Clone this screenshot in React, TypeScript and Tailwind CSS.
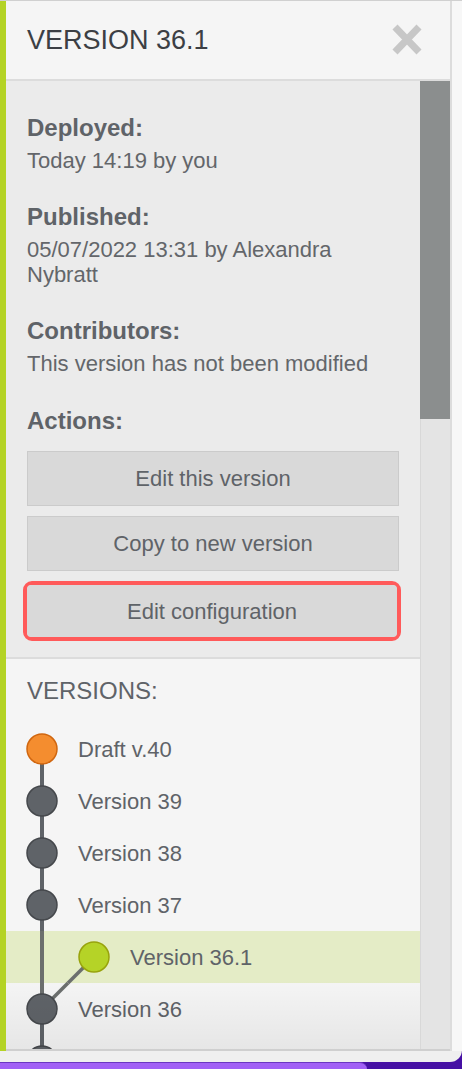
import { Fragment } from 'react'

type Kind = 'draft' | 'main' | 'branch' | 'merge'

interface VersionRow {
  label: string
  kind: Kind
  hidden?: boolean
}

const VERSIONS: VersionRow[] = [
  { label: 'Draft v.40', kind: 'draft' },
  { label: 'Version 39', kind: 'main' },
  { label: 'Version 38', kind: 'main' },
  { label: 'Version 37', kind: 'main' },
  { label: 'Version 36.1', kind: 'branch' },
  { label: 'Version 36', kind: 'merge' },
  // only the top of this node peeks out below the fold
  { label: 'Version 35', kind: 'main', hidden: true },
]

const LINE = '#5f6368'
const LINE_SOFT = '#6c6f6e'

function Node({ cx, fill, stroke }: { cx: number; fill: string; stroke: string }) {
  return <circle cx={cx} cy={26} r={15} fill={fill} stroke={stroke} strokeWidth={1.5} />
}

function Graph({ kind }: { kind: Kind }) {
  const wide = kind === 'branch'
  return (
    <svg width={wide ? 103 : 51} height={52} className="shrink-0 overflow-visible">
      {kind === 'draft' && <line x1={15} y1={26} x2={15} y2={52} stroke={LINE} strokeWidth={4} />}
      {kind === 'main' && <line x1={15} y1={0} x2={15} y2={52} stroke={LINE} strokeWidth={4} />}
      {kind === 'branch' && (
        <>
          <line x1={15} y1={0} x2={15} y2={52} stroke={LINE_SOFT} strokeWidth={4} />
          <line x1={67} y1={26} x2={41} y2={52} stroke={LINE_SOFT} strokeWidth={3.5} />
        </>
      )}
      {kind === 'merge' && (
        <>
          <line x1={15} y1={0} x2={15} y2={26} stroke={LINE_SOFT} strokeWidth={4} />
          <line x1={15} y1={26} x2={15} y2={52} stroke={LINE} strokeWidth={4} />
          <line x1={41} y1={0} x2={15} y2={26} stroke={LINE_SOFT} strokeWidth={3.5} />
        </>
      )}
      {kind === 'draft' && <Node cx={15} fill="#f48d2f" stroke="#d0660f" />}
      {(kind === 'main' || kind === 'merge') && <Node cx={15} fill="#5f6368" stroke="#45484c" />}
      {kind === 'branch' && <Node cx={67} fill="#b5d327" stroke="#98a30c" />}
    </svg>
  )
}

function InfoGroup({ label, children, first }: { label: string; children: React.ReactNode; first?: boolean }) {
  return (
    <div className={first ? '' : 'mt-[31px]'}>
      <div className="text-[24px] font-bold leading-[25px] text-[#5f6368]">{label}</div>
      <div className="mt-[8px] text-[22px] leading-[25px] text-[#63666a]">{children}</div>
    </div>
  )
}

function ActionButton({ children }: { children: React.ReactNode }) {
  return (
    <button className="h-[55px] w-full border border-[#cbcbcb] bg-[#d9d9d9] text-[22px] text-[#5f6368]">
      {children}
    </button>
  )
}

export default function App() {
  return (
    <div className="flex h-[1069px] w-[462px] flex-col overflow-hidden bg-[#4610a4] font-['Liberation_Sans',Arial,sans-serif]">
      <div className="flex h-[1062px] flex-col rounded-br-[12px] border-t border-[#d0d0d0] bg-[#efefef]">
        <div className="flex h-[1050px]">
          <div className="w-[6px] bg-[#b4d325]" />

          <div className="flex w-[444px] flex-col border-b-2 border-[#cfcfcf]">
            {/* header */}
            <div className="flex h-[80px] shrink-0 items-center justify-between border-b-2 border-[#dcdcdc] bg-[#f5f5f5] pl-[21px] pr-[28px]">
              <h1 className="text-[27px] leading-none text-[#3c3f44]">VERSION 36.1</h1>
              <svg width="30" height="31" viewBox="0 0 30 31" className="mb-[1px]">
                <path d="M3 3 L27 28 M27 3 L3 28" stroke="#c7c7c7" strokeWidth="7" />
              </svg>
            </div>

            <div className="flex min-h-0 flex-1">
              <div className="relative w-[414px] overflow-hidden">
                {/* details */}
                <div className="border-b-2 border-[#dcdcdc] bg-[#ebebeb] pb-[16px] pl-[21px] pr-[21px] pt-[34px]">
                  <InfoGroup label="Deployed:" first>
                    Today 14:19 by you
                  </InfoGroup>
                  <InfoGroup label="Published:">05/07/2022 13:31 by Alexandra Nybratt</InfoGroup>
                  <InfoGroup label="Contributors:">This version has not been modified</InfoGroup>
                  <div className="mt-[32px] text-[24px] font-bold leading-[25px] text-[#5f6368]">Actions:</div>
                  <div className="mt-[18px] flex flex-col gap-[10px]">
                    <ActionButton>Edit this version</ActionButton>
                    <ActionButton>Copy to new version</ActionButton>
                    <div className="-ml-[4px] -mr-[2px] rounded-[9px] border-[4px] border-[#ff5a5a]">
                      <button className="h-[52px] w-full rounded-[4px] bg-[#d9d9d9] text-[22px] text-[#5f6368]">
                        Edit configuration
                      </button>
                    </div>
                  </div>
                </div>

                {/* versions */}
                <div className="bg-[#f5f5f5] pt-[18px]">
                  <div className="pl-[21px] text-[24px] leading-[28px] text-[#5f6368]">VERSIONS:</div>
                  <div className="mt-[18px]">
                    {VERSIONS.map((v) => (
                      <Fragment key={v.label}>
                        <div
                          className={
                            v.kind === 'branch'
                              ? 'flex h-[52px] items-center bg-[#e4ecc6] pl-[21px]'
                              : 'flex h-[52px] items-center pl-[21px]'
                          }
                        >
                          <Graph kind={v.kind} />
                          {!v.hidden && <span className="text-[22px] text-[#5f6368]">{v.label}</span>}
                        </div>
                      </Fragment>
                    ))}
                  </div>
                </div>

                <div className="pointer-events-none absolute inset-x-0 bottom-0 h-[70px] bg-linear-to-b from-transparent to-black/[0.06]" />
              </div>

              {/* scrollbar */}
              <div className="flex w-[30px] flex-col border-l border-[#d8d8d8] bg-[#e4e4e4]">
                <div className="-ml-px h-[338px] bg-[#8b8e8e]" />
              </div>
            </div>
          </div>

          <div className="w-[2px] bg-[#dcdcdc]" />
          <div className="flex-1 bg-[#f7f7f7]" />
        </div>
      </div>

      <div className="flex flex-1">
        <div className="w-[367px] rounded-tr-[12px] border-t border-[#6a36c2] bg-[#a160f5]" />
        <div className="flex-1" />
      </div>
    </div>
  )
}
